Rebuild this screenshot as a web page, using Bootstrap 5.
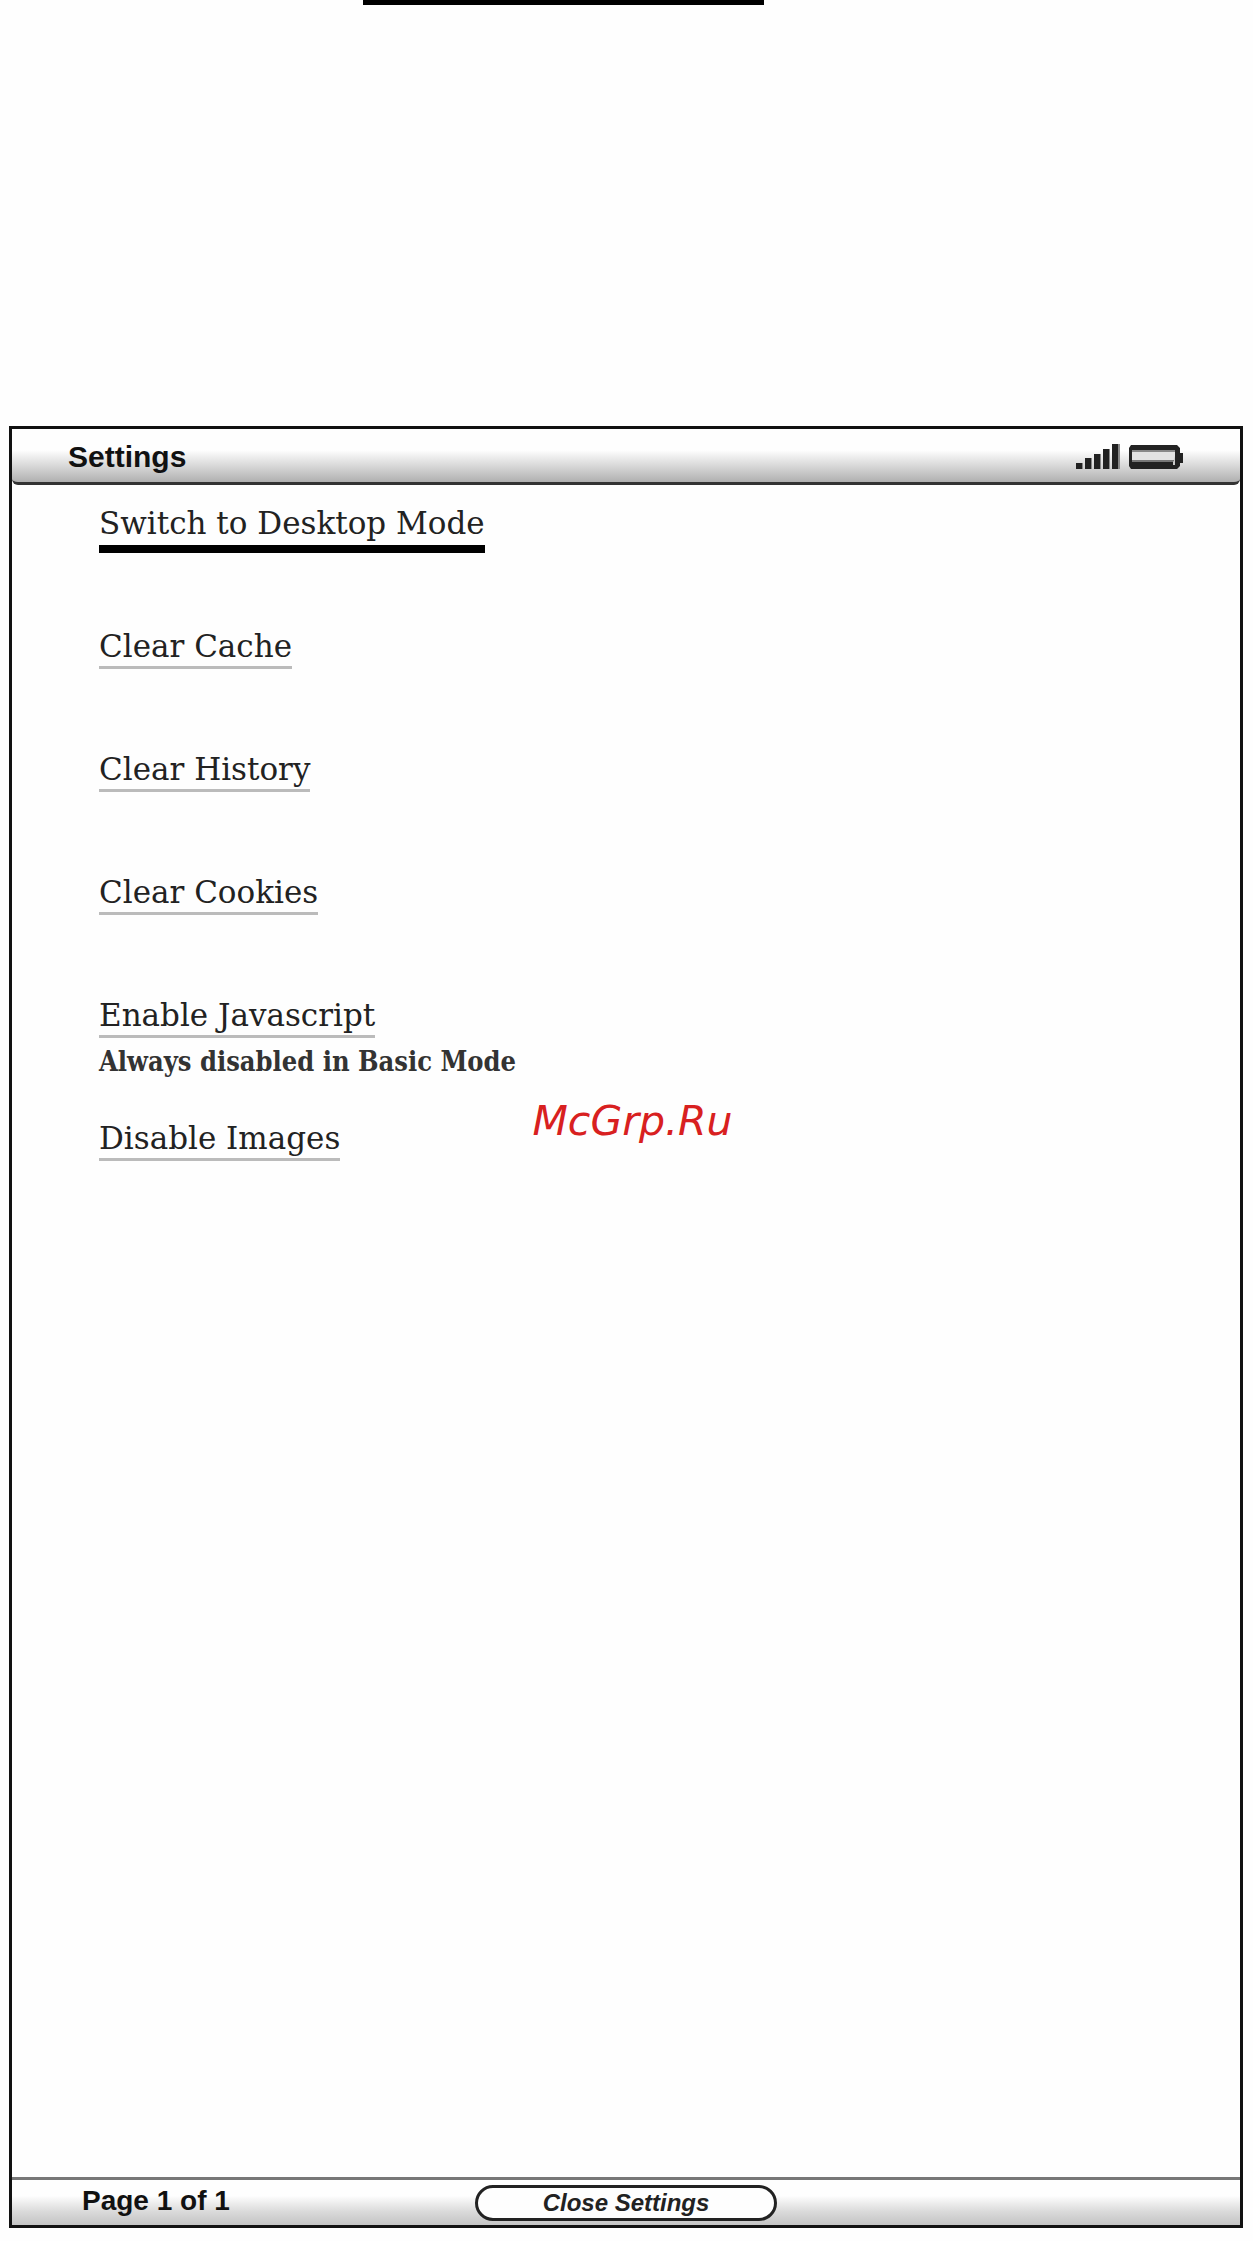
<!DOCTYPE html>
<html lang="en">
<head>
<meta charset="utf-8">
<meta name="viewport" content="width=device-width, initial-scale=1">
<title>Settings</title>
<link href="https://cdn.jsdelivr.net/npm/bootstrap@5.3.0/dist/css/bootstrap.min.css" rel="stylesheet">
<style>
body { background: #fefefe; color: #111; font-family: "Liberation Sans", sans-serif; }
.top-rule { height: 5px; width: 32%; margin-left: 29%; background: #000; }
.device { margin: 421px 10px 13px 9px; border: 3px solid #111; }
.status-strip { height: 56px; padding: 3px 56px 0; border-bottom: 3px solid #333; border-radius: 0 0 6px 6px;
  background: linear-gradient(#fefefe 40%, #dadada 68%, #b0b0b0); }
.strip-title { font-size: 30px; line-height: 36px; font-weight: 700; margin: 0; }
.options { padding: 18px 87px; font-family: "DejaVu Serif", serif; }
.option { height: 123px; }
.option a { display: inline-block; font-size: 31px; line-height: 40px; color: #222; text-decoration: none; border-bottom: 3px solid #bbb; }
.option a.current { padding-bottom: 2px; border-bottom: 8px solid #000; }
.option p { font-family: "DejaVu Serif Condensed", "DejaVu Serif", serif; font-size: 27px; line-height: 36px; margin: 6px 0 0; font-weight: 700; color: #333; }
.foot-strip { height: 48px; border-top: 3px solid #777; background: linear-gradient(#fefefe 35%, #dadada 70%, #c4c4c4); }
.page-count { font-size: 28px; line-height: 42px; font-weight: 700; margin: 0 0 0 70px; }
.close-btn { width: 302px; height: 36px; margin-top: 5px; padding: 0; border: 3px solid #222; border-radius: 18px;
  background: #fefefe; color: #222; font-size: 24px; line-height: 28px; font-weight: 700; font-style: italic; }
.watermark { top: 1097px; left: 50%; margin-left: -94px; font: italic 41px/48px "DejaVu Sans", sans-serif; color: #d82020; }
</style>
<script src="https://cdn.jsdelivr.net/npm/bootstrap@5.3.0/dist/js/bootstrap.bundle.min.js"></script>
</head>
<body class="position-relative d-flex flex-column min-vh-100">
<div class="top-rule"></div>
<div class="device d-flex flex-column flex-grow-1">
  <header class="status-strip d-flex align-items-center justify-content-between">
    <h1 class="strip-title">Settings</h1>
    <svg width="110" height="30" viewBox="0 0 110 30" role="img" aria-label="Signal and battery">
      <g fill="#222"><path d="M2 21h6v6H2zM11 16h6v11h-6zM20 12h6v15h-6zM29 7h6v20h-6zM38 2h6v25h-6z"/>
      <path d="M57 3h46l3 3v5h3v10h-3v3l-3 3H57l-2-3V6z"/></g>
      <g fill="#888"><path d="M8 21h1v6H8zM17 16h1v11h-1zM26 12h1v15h-1zM35 7h1v20h-1zM44 2h2v25h-2z"/></g>
      <path d="M58 8h43v10H58z" fill="#e2e2e2"/><path d="M58 8h43v2H58z" fill="#888"/><path d="M58 18h41v2H58z" fill="#777"/>
      <path d="M99 20l2-6v9h-2z" fill="#ccc"/>
    </svg>
  </header>
  <main class="options flex-grow-1">
    <div class="option"><a class="current" href="#">Switch to Desktop Mode</a></div>
    <div class="option"><a href="#">Clear Cache</a></div>
    <div class="option"><a href="#">Clear History</a></div>
    <div class="option"><a href="#">Clear Cookies</a></div>
    <div class="option"><a href="#">Enable Javascript</a><p>Always disabled in Basic Mode</p></div>
    <div class="option"><a href="#">Disable Images</a></div>
  </main>
  <footer class="foot-strip row g-0">
    <div class="col"><p class="page-count">Page 1 of 1</p></div>
    <div class="col-auto"><button type="button" class="close-btn d-block">Close Settings</button></div>
    <div class="col"></div>
  </footer>
</div>
<div class="watermark position-absolute">McGrp.Ru</div>
</body>
</html>
